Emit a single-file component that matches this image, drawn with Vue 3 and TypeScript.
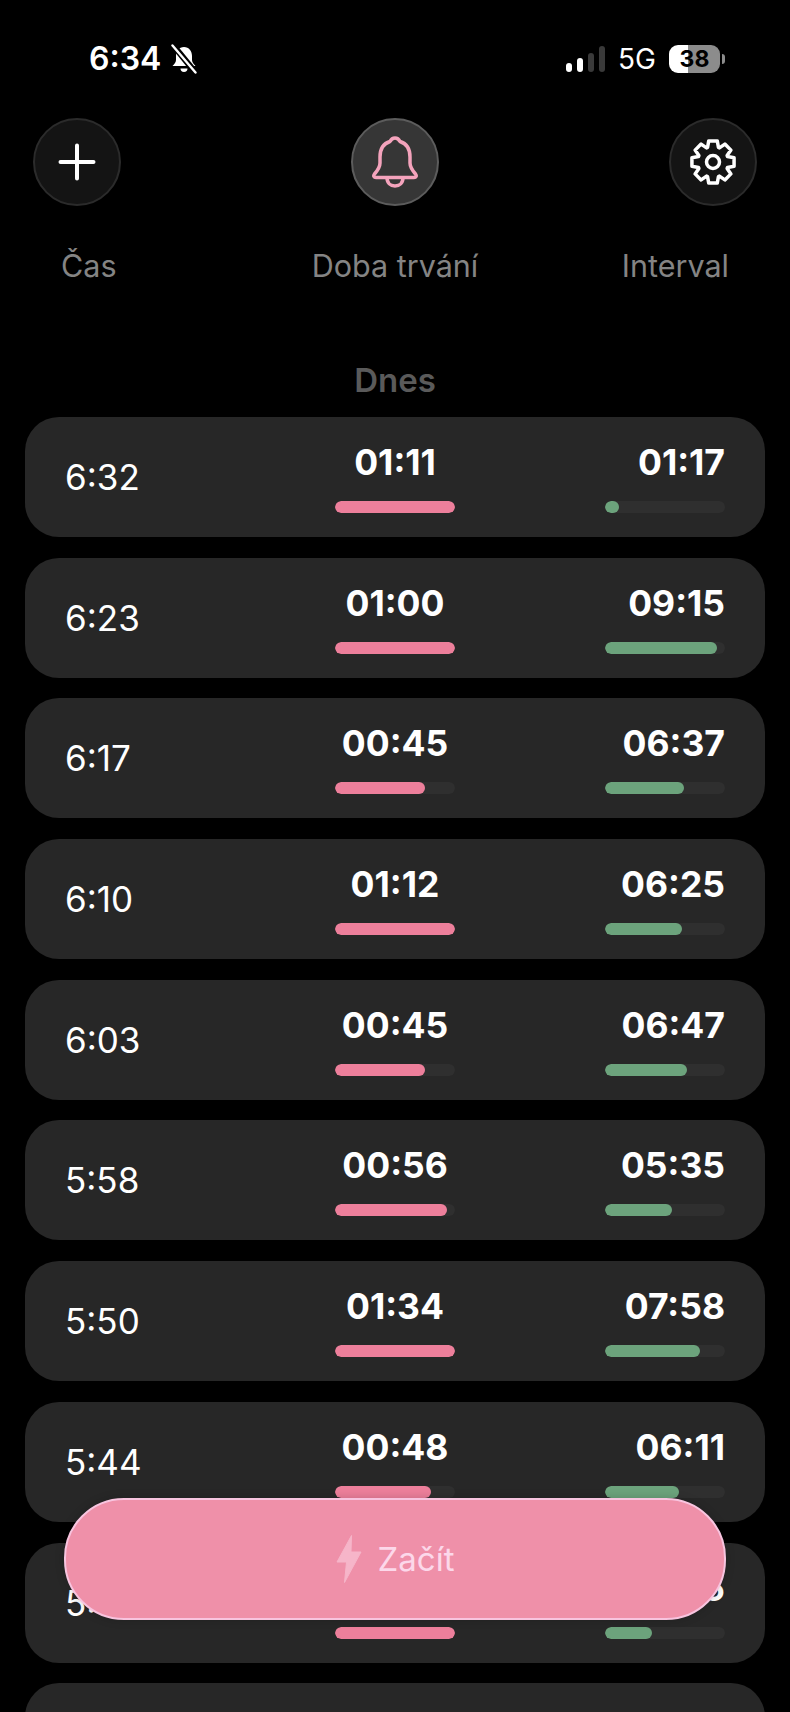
<script setup lang="ts">
interface Row {
  time: string
  duration: string
  durationPct: number
  interval: string
  intervalPct: number
}

const rows: Row[] = [
  { time: '6:32', duration: '01:11', durationPct: 100, interval: '01:17', intervalPct: 12 },
  { time: '6:23', duration: '01:00', durationPct: 100, interval: '09:15', intervalPct: 93 },
  { time: '6:17', duration: '00:45', durationPct: 75, interval: '06:37', intervalPct: 66 },
  { time: '6:10', duration: '01:12', durationPct: 100, interval: '06:25', intervalPct: 64 },
  { time: '6:03', duration: '00:45', durationPct: 75, interval: '06:47', intervalPct: 68 },
  { time: '5:58', duration: '00:56', durationPct: 93, interval: '05:35', intervalPct: 56 },
  { time: '5:50', duration: '01:34', durationPct: 100, interval: '07:58', intervalPct: 79 },
  { time: '5:44', duration: '00:48', durationPct: 80, interval: '06:11', intervalPct: 62 },
  { time: '5:37', duration: '01:02', durationPct: 100, interval: '03:55', intervalPct: 39 },
]

// zubate kolecko nastaveni, 8 zubu
function gearPath(cx: number, cy: number, outer: number, inner: number): string {
  const pts: string[] = []
  for (let i = 0; i < 8; i++) {
    const a = (i * Math.PI) / 4
    const steps: [number, number][] = [
      [inner, a - 0.36],
      [outer, a - 0.2],
      [outer, a + 0.2],
      [inner, a + 0.36],
    ]
    for (const [r, t] of steps) {
      pts.push(`${(cx + r * Math.sin(t)).toFixed(2)} ${(cy - r * Math.cos(t)).toFixed(2)}`)
    }
  }
  return 'M' + pts.join('L') + 'Z'
}

const gear = gearPath(24, 24, 21.5, 15.5)
</script>

<template>
  <div class="page">
    <div class="status">
      <div class="status-left">
        <span class="clock">6:34</span>
        <svg class="mute" width="28" height="30" viewBox="0 0 28 30">
          <path d="M14 3c-5 0-8 4-8 9v4c0 2-1.500 4-3.500 6h23c-2-2-3.500-4-3.500-6v-4c0-5-3-9-8-9z" fill="#fff" />
          <path d="M10.500 24.500a3.500 3.500 0 0 0 7 0z" fill="#fff" />
          <path d="M3 1l22 27" stroke="#000" stroke-width="6" />
          <path d="M2.500 1.500l23 27" stroke="#fff" stroke-width="2.400" stroke-linecap="round" />
        </svg>
      </div>
      <div class="status-right">
        <div class="signal">
          <i class="on h1"></i>
          <i class="on h2"></i>
          <i class="h3"></i>
          <i class="h4"></i>
        </div>
        <span class="net">5G</span>
        <div class="battery">38</div>
        <div class="nub"></div>
      </div>
    </div>

    <div class="actions">
      <button class="round">
        <svg width="40" height="40" viewBox="0 0 40 40">
          <path d="M20 3.500v33M3.500 20h33" stroke="#fff" stroke-width="4" stroke-linecap="round" />
        </svg>
      </button>
      <button class="round active">
        <svg width="46" height="52" viewBox="0 0 46 52" fill="none" stroke="#f4a3bc" stroke-width="3.500" stroke-linejoin="round">
          <path d="M23 2C20.500 2 19 3.500 18 5.500 11.500 7.500 8 13 8 21v6c0 4-2 7-5.500 11-1.500 2-.5 3.500 1.500 3.500h38c2 0 3-1.500 1.500-3.500C40 34 38 31 38 27v-6c0-8-3.500-13.500-10-15.500C27 3.500 25.500 2 23 2z" />
          <path d="M15 41.500c0 5.500 3.500 8.500 8 8.500s8-3 8-8.500" />
        </svg>
      </button>
      <button class="round">
        <svg width="48" height="48" viewBox="0 0 48 48" fill="none" stroke="#fff" stroke-width="3.500" stroke-linejoin="round">
          <path :d="gear" />
          <circle cx="24" cy="24" r="6.500" />
        </svg>
      </button>
    </div>

    <div class="labels">
      <span class="l-time">Čas</span>
      <span>Doba trvání</span>
      <span class="l-int">Interval</span>
    </div>

    <div class="day">Dnes</div>

    <div class="list">
      <div v-for="row in rows" :key="row.time" class="card">
        <div class="time">{{ row.time }}</div>
        <div class="cell center">
          <div class="value">{{ row.duration }}</div>
          <div class="track">
            <div class="fill pink" :style="{ width: row.durationPct + '%' }"></div>
          </div>
        </div>
        <div class="cell end">
          <div class="value">{{ row.interval }}</div>
          <div class="track">
            <div class="fill green" :style="{ width: row.intervalPct + '%' }"></div>
          </div>
        </div>
      </div>
      <!-- dalsi radek je videt jen horni hranou -->
      <div class="card"></div>
    </div>

    <button class="start">
      <svg width="26" height="50" viewBox="0 0 26 50">
        <path d="M15.500 1.500 1 28h9.500L8.500 48.500 25 18H15z" fill="#f6b5c9" stroke="#f6b5c9" stroke-linejoin="round" />
      </svg>
      <span>Začít</span>
    </button>
  </div>
</template>

<style scoped>
.page {
  position: relative;
  width: 790px;
  height: 1712px;
  overflow: hidden;
  background: #000;
  font-family: Inter, "Liberation Sans", sans-serif;
  color: #fff;
}
.status {
  display: flex;
  justify-content: space-between;
  height: 118px;
  padding: 44px 65px 0 89px;
  box-sizing: border-box;
}
.status-left {
  display: flex;
  align-items: flex-start;
  gap: 9px;
}
.clock {
  font-size: 32px;
  font-weight: 600;
  line-height: 30px;
}
.mute {
  margin-top: 0;
}
.status-right {
  display: flex;
  align-items: flex-start;
}
.signal {
  display: flex;
  align-items: flex-end;
  gap: 5px;
  height: 26px;
  margin-top: 2px;
}
.signal i {
  display: block;
  width: 6px;
  border-radius: 3px;
  background: #3a3a3a;
}
.signal i.on {
  background: #fff;
}
.h1 { height: 9px; }
.h2 { height: 14px; }
.h3 { height: 19px; }
.h4 { height: 26px; }
.net {
  margin-left: 13px;
  font-size: 28px;
  line-height: 30px;
}
.battery {
  width: 51px;
  height: 28px;
  margin-left: 13px;
  margin-top: 1px;
  border-radius: 9px;
  background: linear-gradient(90deg, #fff 37%, #8c8c8c 37%);
  color: #000;
  font-size: 23px;
  font-weight: 700;
  line-height: 28px;
  text-align: center;
}
.nub {
  width: 3px;
  height: 10px;
  margin: 10px 0 0 2px;
  border-radius: 0 3px 3px 0;
  background: #8c8c8c;
}
.actions {
  display: flex;
  justify-content: space-between;
  padding: 0 33px;
}
.round {
  display: flex;
  align-items: center;
  justify-content: center;
  width: 88px;
  height: 88px;
  padding: 0;
  border: 2px solid #2b2b2b;
  border-radius: 50%;
  background: #141414;
  box-sizing: border-box;
}
.round.active {
  border-color: #5c5c5c;
  background: #363636;
}
.labels {
  display: grid;
  grid-template-columns: 1fr auto 1fr;
  margin-top: 41px;
  padding: 0 61px;
  font-size: 30.5px;
  line-height: 38px;
  color: #848484;
}
.l-int {
  justify-self: end;
}
.day {
  margin-top: 77px;
  font-size: 33px;
  font-weight: 600;
  line-height: 36px;
  text-align: center;
  color: #5a5a5a;
}
.list {
  display: flex;
  flex-direction: column;
  gap: 20.7px;
  margin-top: 19px;
  padding: 0 25px;
}
.card {
  display: grid;
  grid-template-columns: 1fr 120px 1fr;
  align-items: center;
  flex: none;
  height: 120px;
  padding: 0 40px;
  border-radius: 34px;
  background: #272727;
}
.time {
  font-size: 35px;
  line-height: 40px;
}
.cell {
  display: flex;
  flex-direction: column;
  width: 120px;
}
.center {
  align-items: center;
}
.end {
  align-items: flex-end;
  justify-self: end;
}
.value {
  margin-bottom: 19px;
  font-size: 35.5px;
  font-weight: 700;
  line-height: 38px;
  white-space: nowrap;
}
.track {
  width: 120px;
  height: 12px;
  margin-bottom: -3px;
  border-radius: 6px;
  background: #2f2f2f;
  overflow: hidden;
}
.fill {
  height: 100%;
  border-radius: 6px;
}
.pink {
  background: #ed7f9b;
}
.green {
  background: #6ca37c;
}
.start {
  position: absolute;
  left: 64px;
  top: 1498px;
  display: flex;
  align-items: center;
  justify-content: center;
  gap: 16px;
  width: 662px;
  height: 122px;
  padding: 0;
  border: 2px solid #f8c4df;
  border-radius: 60px;
  background: #ef90a9;
  box-shadow: 0 0 10px rgba(0, 0, 0, 0.18);
  box-sizing: border-box;
  color: #fcd8ea;
  font-family: inherit;
  font-size: 33px;
}
</style>

<style>
html,
body {
  background: #000;
}
</style>
